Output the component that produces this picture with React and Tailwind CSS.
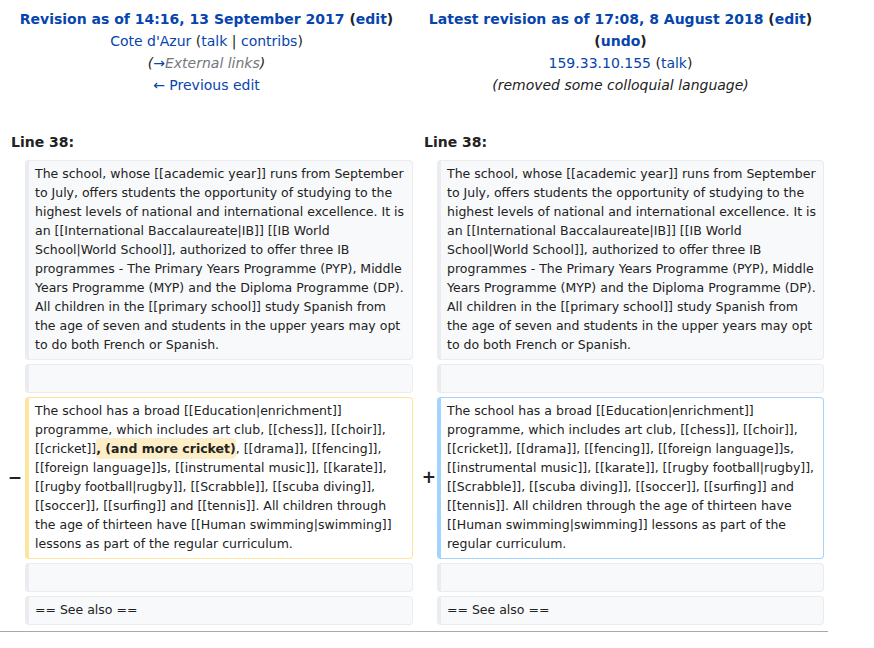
const linkCls = 'text-[#0645ad]';

const Box = ({ kind = 'context', children }) => {
  const border =
    kind === 'del'
      ? 'border-[#ffe49c] bg-white'
      : kind === 'add'
      ? 'border-[#a3d3ff] bg-white'
      : 'border-[#eaecf0] bg-[#f8f9fa]';
  return (
    <div
      className={`min-h-[29px] rounded-[4px] border border-l-4 ${border} pt-[3px] pb-[5px] pl-[6px] pr-[6px] text-[12.5px] leading-[19px] break-words`}
    >
      {children}
    </div>
  );
};

const Row = ({ left, right, leftKind, rightKind, leftMarker, rightMarker }) => (
  <div className="grid grid-cols-[25px_388px_24px_387px] items-center">
    <div className="pr-[3px] text-right text-[17px] font-bold">{leftMarker}</div>
    <Box kind={leftKind}>{left}</Box>
    <div className="pr-[1px] text-right text-[17px] font-bold">{rightMarker}</div>
    <Box kind={rightKind}>{right}</Box>
  </div>
);

const para1 =
  'The school, whose [[academic year]] runs from September to July, offers students the opportunity of studying to the highest levels of national and international excellence. It is an [[International Baccalaureate|IB]] [[IB World School|World School]], authorized to offer three IB programmes - The Primary Years Programme (PYP), Middle Years Programme (MYP) and the Diploma Programme (DP). All children in the [[primary school]] study Spanish from the age of seven and students in the upper years may opt to do both French or Spanish.';

const App = () => {
  return (
    <div className="w-[828px] bg-white font-['DejaVu_Sans',sans-serif] text-[#222]">
      <div className="grid grid-cols-[413px_415px] pt-[8px] text-center text-[14px] leading-[22px]">
        <div>
          <div className="font-bold">
            <span className={linkCls}>Revision as of 14:16, 13 September 2017</span> (
            <span className={linkCls}>edit</span>)
          </div>
          <div>
            <span className={linkCls}>Cote d'Azur</span> (<span className={linkCls}>talk</span> |{' '}
            <span className={linkCls}>contribs</span>)
          </div>
          <div className="italic">
            (<span className={linkCls}>→</span>
            <span className="text-[#72777d]">External links</span>)
          </div>
          <div>
            <span className={linkCls}>← Previous edit</span>
          </div>
        </div>
        <div>
          <div className="font-bold">
            <span className={linkCls}>Latest revision as of 17:08, 8 August 2018</span> (
            <span className={linkCls}>edit</span>)
          </div>
          <div className="font-bold">
            (<span className={linkCls}>undo</span>)
          </div>
          <div>
            <span className={linkCls}>159.33.10.155</span> (<span className={linkCls}>talk</span>)
          </div>
          <div className="italic">(removed some colloquial language)</div>
        </div>
      </div>

      <div className="mt-[35px] grid grid-cols-[413px_415px] text-[14px] font-bold leading-[22px]">
        <div className="pl-[11px]">Line 38:</div>
        <div className="pl-[11px]">Line 38:</div>
      </div>

      <div className="mt-[7px] flex flex-col gap-[4px]">
        <Row left={para1} right={para1} />
        <Row left="" right="" />
        <Row
          leftKind="del"
          rightKind="add"
          leftMarker="−"
          rightMarker="+"
          left={
            <>
              The school has a broad [[Education|enrichment]] programme, which includes art club, [[chess]], [[choir]], [[cricket]]
              <span className="rounded-[4px] bg-[#feeec8] py-[3px] font-bold">, (and more cricket)</span>, [[drama]], [[fencing]],
              [[foreign language]]s, [[instrumental music]], [[karate]], [[rugby football|rugby]], [[Scrabble]], [[scuba diving]],
              [[soccer]], [[surfing]] and [[tennis]]. All children through the age of thirteen have [[Human swimming|swimming]]
              lessons as part of the regular curriculum.
            </>
          }
          right="The school has a broad [[Education|enrichment]] programme, which includes art club, [[chess]], [[choir]], [[cricket]], [[drama]], [[fencing]], [[foreign language]]s, [[instrumental music]], [[karate]], [[rugby football|rugby]], [[Scrabble]], [[scuba diving]], [[soccer]], [[surfing]] and [[tennis]]. All children through the age of thirteen have [[Human swimming|swimming]] lessons as part of the regular curriculum."
        />
        <Row left="" right="" />
        <Row left="== See also ==" right="== See also ==" />
      </div>

      <div className="mt-[6px] h-px w-[828px] bg-[#a2a9b1]" />
    </div>
  );
};

export default App;
